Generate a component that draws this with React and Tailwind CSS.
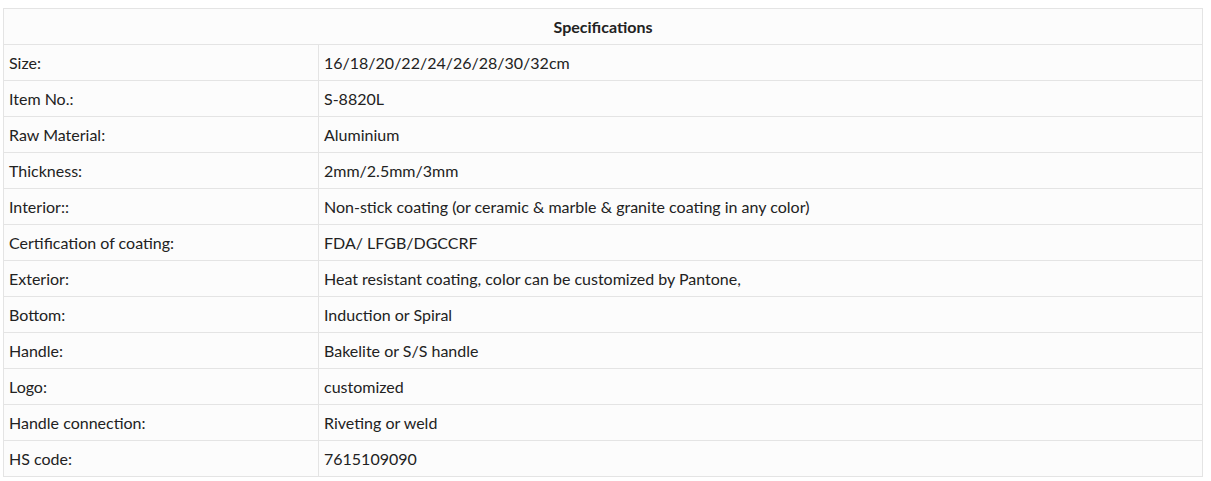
export default function App() {
  const rows = [
    ["Size:", "16/18/20/22/24/26/28/30/32cm"],
    ["Item No.:", "S-8820L"],
    ["Raw Material:", "Aluminium"],
    ["Thickness:", "2mm/2.5mm/3mm"],
    ["Interior::", "Non-stick coating (or ceramic & marble & granite coating in any color)"],
    ["Certification of coating:", "FDA/ LFGB/DGCCRF"],
    ["Exterior:", "Heat resistant coating, color can be customized by Pantone,"],
    ["Bottom:", "Induction or Spiral"],
    ["Handle:", "Bakelite or S/S handle"],
    ["Logo:", "customized"],
    ["Handle connection:", "Riveting or weld"],
    ["HS code:", "7615109090"],
  ];
  return (
    <div className="bg-white w-[1211px] h-[481px] pt-[8px] pl-[3px]" style={{ fontFamily: "Lato, 'Open Sans', sans-serif" }}>
      <table className="w-[1200px] border-collapse bg-[#fcfcfc] text-[16px] leading-[20px] text-[#222] table-fixed">
        <colgroup>
          <col className="w-[315px]" />
          <col />
        </colgroup>
        <tbody>
          <tr className="h-[36px]">
            <td colSpan={2} className="border border-[#e4e4e4] text-center font-bold px-[5px] pt-[1px]">Specifications</td>
          </tr>
          {rows.map(([k, v]) => (
            <tr key={k} className="h-[36px]">
              <td className="border border-[#e4e4e4] px-[5px] pt-[1px]">{k}</td>
              <td className="border border-[#e4e4e4] px-[5px] pt-[1px]">{v}</td>
            </tr>
          ))}
        </tbody>
      </table>
    </div>
  );
}
